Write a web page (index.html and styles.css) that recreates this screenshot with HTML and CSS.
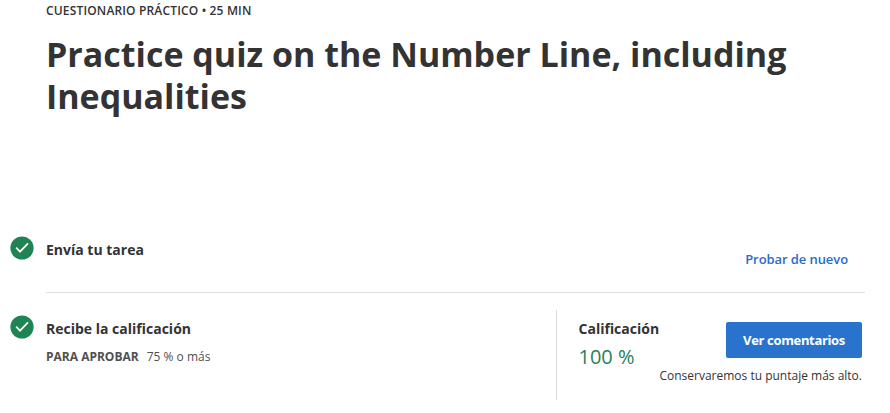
FILE: index.html
```html
<!DOCTYPE html>
<html lang="es">
<head>
<meta charset="utf-8">
<title>Cuestionario práctico</title>
<link rel="stylesheet" href="styles.css">
</head>
<body>
<main class="page">
  <header class="head">
    <div class="kicker">CUESTIONARIO PRÁCTICO • 25 MIN</div>
    <h1 class="title">Practice quiz on the Number Line, including Inequalities</h1>
  </header>
  <section class="row submit">
    <svg class="check" viewBox="0 0 24 24"><circle cx="12" cy="12" r="11.6" fill="#1f8354"/><path d="M6.2 11.7l3.8 4 8-8.4" fill="none" stroke="#fff" stroke-width="1.7"/></svg>
    <div class="body">
      <h2 class="label">Envía tu tarea</h2>
      <a class="retry">Probar de nuevo</a>
    </div>
  </section>
  <section class="row grade">
    <svg class="check" viewBox="0 0 24 24"><circle cx="12" cy="12" r="11.6" fill="#1f8354"/><path d="M6.2 11.7l3.8 4 8-8.4" fill="none" stroke="#fff" stroke-width="1.7"/></svg>
    <div class="info">
      <h2 class="label">Recibe la calificación</h2>
      <p class="pass"><b>PARA APROBAR</b><span>75 % o más</span></p>
    </div>
    <div class="result">
      <div class="score">
        <h2 class="label">Calificación</h2>
        <div class="value">100 %</div>
      </div>
      <button class="button">Ver comentarios</button>
      <p class="note">Conservaremos tu puntaje más alto.</p>
    </div>
  </section>
</main>
</body>
</html>
```
FILE: styles.css
```css
* { box-sizing: border-box; margin: 0; padding: 0; }
body { background: #fff; color: #333; font-family: "Open Sans", sans-serif; width: 890px; height: 413px; overflow: hidden; }
.page { padding: 2px 25px 0 10px; }
.head { height: 234px; padding-left: 36px; }
.kicker { font-size: 12px; line-height: 18px; font-weight: 600; letter-spacing: 0.16px; white-space: nowrap; }
.title { margin-top: 13px; font-size: 34px; line-height: 42px; font-weight: 700; }
.row { display: flex; }
.check { width: 24px; height: 24px; flex: none; margin-right: 12px; }
.label { font-size: 14px; line-height: 20px; font-weight: 700; white-space: nowrap; }
.body { flex: 1; display: flex; justify-content: space-between; height: 57px; border-bottom: 1px solid #dedede; padding-top: 4px; }
.retry { color: #2a6bc9; font-size: 13px; line-height: 20px; font-weight: 600; letter-spacing: -0.08px; margin: 9px 17px 0 0; white-space: nowrap; }
.grade { padding-top: 17px; }
.grade .check { margin-top: 5px; }
.info { width: 510px; height: 90px; padding-top: 9px; }
.pass { display: flex; gap: 8px; margin-top: 8px; font-size: 12px; line-height: 20px; color: #505050; white-space: nowrap; }
.pass b { font-weight: 700; }
.result { flex: 1; display: grid; grid-template-columns: 1fr auto; grid-template-rows: 56px 20px; height: 90px; border-left: 1px solid #dedede; padding: 0 3px 0 21.5px; }
.score { padding-top: 9px; }
.value { font-size: 20px; line-height: 28px; margin-top: 4px; font-weight: 400; color: #2a8058; }
.button { width: 136px; height: 36px; margin-top: 12px; border: 0; border-radius: 2px; background: #2a73cc; color: #fff; font: 700 13px "Open Sans", sans-serif; letter-spacing: -0.35px; white-space: nowrap; }
.note { grid-column: 1 / 3; justify-self: end; font-size: 12px; line-height: 20px; white-space: nowrap; }
```
